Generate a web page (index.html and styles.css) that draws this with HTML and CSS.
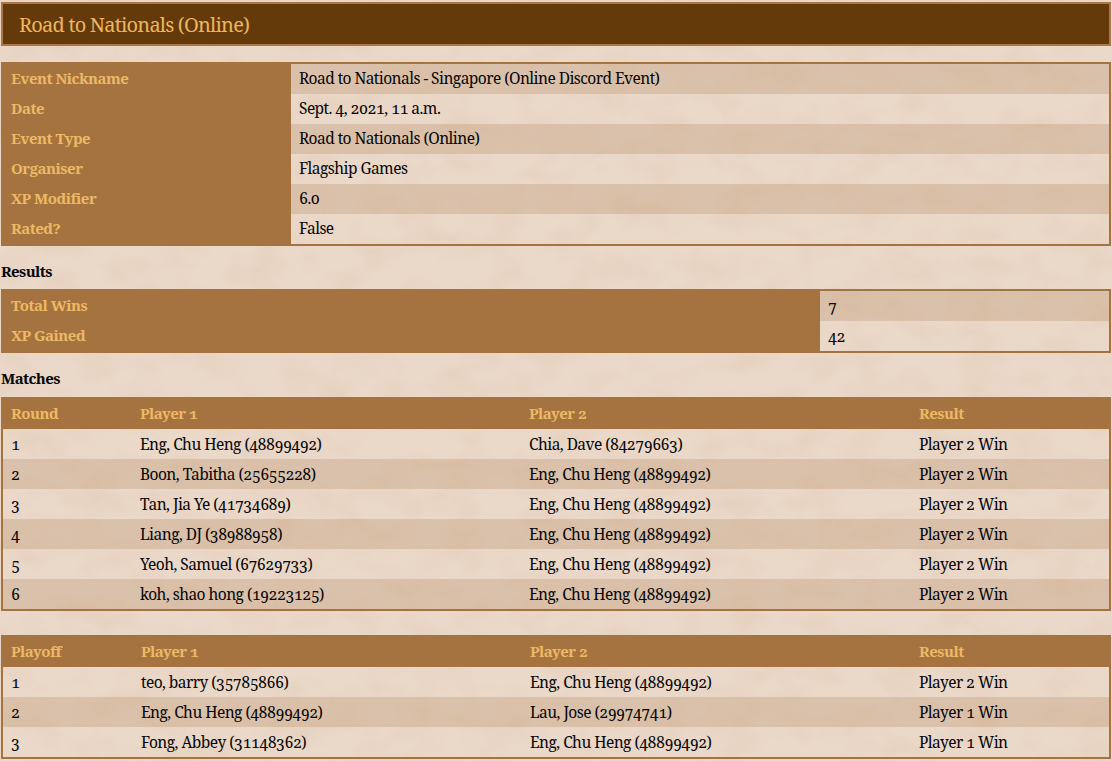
FILE: index.html
```html
<!DOCTYPE html>
<html lang="en">
<head>
<meta charset="utf-8">
<title>Road to Nationals (Online)</title>
<link rel="stylesheet" href="styles.css">
</head>
<body>
<header class="title-bar"><h1>Road to Nationals (Online)</h1></header>
<table class="panel info">
<tbody>
<tr><th>Event Nickname</th><td>Road to Nationals - Singapore (Online Discord Event)</td></tr>
<tr><th>Date</th><td>Sept. 4, 2021, 11 a.m.</td></tr>
<tr><th>Event Type</th><td>Road to Nationals (Online)</td></tr>
<tr><th>Organiser</th><td>Flagship Games</td></tr>
<tr><th>XP Modifier</th><td>6.0</td></tr>
<tr><th>Rated?</th><td>False</td></tr>
</tbody>
</table>
<h2>Results</h2>
<table class="panel results">
<tbody>
<tr><th>Total Wins</th><td>7</td></tr>
<tr><th>XP Gained</th><td>42</td></tr>
</tbody>
</table>
<h2 class="matches-title">Matches</h2>
<table class="panel matches">
<colgroup><col class="c-round"><col class="c-p1"><col class="c-p2"><col class="c-res"></colgroup>
<thead><tr><th>Round</th><th>Player 1</th><th>Player 2</th><th>Result</th></tr></thead>
<tbody>
<tr><td>1</td><td>Eng, Chu Heng (48899492)</td><td>Chia, Dave (84279663)</td><td>Player 2 Win</td></tr>
<tr><td>2</td><td>Boon, Tabitha (25655228)</td><td>Eng, Chu Heng (48899492)</td><td>Player 2 Win</td></tr>
<tr><td>3</td><td>Tan, Jia Ye (41734689)</td><td>Eng, Chu Heng (48899492)</td><td>Player 2 Win</td></tr>
<tr><td>4</td><td>Liang, DJ (38988958)</td><td>Eng, Chu Heng (48899492)</td><td>Player 2 Win</td></tr>
<tr><td>5</td><td>Yeoh, Samuel (67629733)</td><td>Eng, Chu Heng (48899492)</td><td>Player 2 Win</td></tr>
<tr><td>6</td><td>koh, shao hong (19223125)</td><td>Eng, Chu Heng (48899492)</td><td>Player 2 Win</td></tr>
</tbody>
</table>
<table class="panel matches playoff">
<colgroup><col class="c-round"><col class="c-p1"><col class="c-p2"><col class="c-res"></colgroup>
<thead><tr><th>Playoff</th><th>Player 1</th><th>Player 2</th><th>Result</th></tr></thead>
<tbody>
<tr><td>1</td><td>teo, barry (35785866)</td><td>Eng, Chu Heng (48899492)</td><td>Player 2 Win</td></tr>
<tr><td>2</td><td>Eng, Chu Heng (48899492)</td><td>Lau, Jose (29974741)</td><td>Player 1 Win</td></tr>
<tr><td>3</td><td>Fong, Abbey (31148362)</td><td>Eng, Chu Heng (48899492)</td><td>Player 1 Win</td></tr>
</tbody>
</table>
</body>
</html>
```
FILE: styles.css
```css
* { box-sizing: border-box; }
html { background: #e8d5c5; }
body {
  margin: 0;
  padding: 2px 1px 0;
  height: 761px;
  overflow: hidden;
  color: #050508;
  font-family: "Noto Serif", "Liberation Serif", serif;
  font-size: 15.5px;
  letter-spacing: -0.55px;
  font-feature-settings: "onum";
  background-color: #ead8c9;
  background-image: url("data:image/svg+xml,%3Csvg xmlns='http://www.w3.org/2000/svg' width='1112' height='761'%3E%3Cfilter id='n'%3E%3CfeTurbulence type='fractalNoise' baseFrequency='.025 .035' numOctaves='6' seed='11'/%3E%3CfeColorMatrix values='0 0 0 0 .72 0 0 0 0 .52 0 0 0 0 .36 .5 0 0 0 -.2'/%3E%3C/filter%3E%3Crect width='1112' height='761' filter='url(%23n)'/%3E%3C/svg%3E");
}
.title-bar {
  height: 44px;
  margin-bottom: 16px;
  padding-left: 16px;
  display: flex;
  align-items: center;
  background: #653a0a;
  border: 2px solid #ab7744;
}
h1 {
  margin: 0;
  color: #ecb65f;
  font-size: 20px;
  font-weight: 400;
  letter-spacing: -0.8px;
}
h2 {
  margin: 0;
  height: 43px;
  padding-top: 6px;
  display: flex;
  align-items: center;
  font-size: 15px;
  font-weight: 700;
  letter-spacing: -0.6px;
}
.matches-title { height: 44px; }
.panel {
  width: 1110px;
  table-layout: fixed;
  border-collapse: separate;
  border-spacing: 0;
  border: 2px solid #a5733f;
}
th, td {
  height: 30px;
  padding: 0 8px 2px;
  text-align: left;
  vertical-align: middle;
}
th {
  background: #a5733f;
  color: #ecb965;
  font-size: 15px;
  font-weight: 700;
  letter-spacing: -0.5px;
}
tbody tr:nth-child(odd) td { background: rgba(165, 115, 63, 0.22); }
.info th { width: 288px; }
.results th { width: 817px; }
.results td { padding-bottom: 1px; }
.matches { border-top: 0; }
.matches thead th { height: 32px; padding: 0; }
.matches thead th:first-child, .matches td:first-child { padding-left: 8px; }
.matches td { padding: 0; }
.matches tbody tr:nth-child(odd) td { background: none; }
.matches tbody tr:nth-child(even) td { background: rgba(165, 115, 63, 0.22); }
.c-round { width: 137px; }
.c-p1 { width: 389px; }
.c-p2 { width: 390px; }
.playoff { margin-top: 24px; }
.playoff .c-round { width: 138px; }
.playoff .c-p2 { width: 389px; }
```
